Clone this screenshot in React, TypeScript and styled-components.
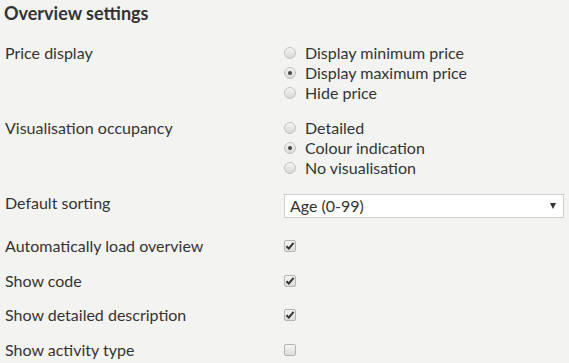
import styled, { createGlobalStyle } from "styled-components";

const GlobalStyle = createGlobalStyle`
  html, body {
    margin: 0;
    padding: 0;
    background: #f3f3f2;
  }
  body {
    font-family: "Lato", "Open Sans", sans-serif;
    color: #333333;
  }
`;

type Option = { label: string; checked?: boolean };

const priceOptions: Option[] = [
  { label: "Display minimum price" },
  { label: "Display maximum price", checked: true },
  { label: "Hide price" },
];

const visualOptions: Option[] = [
  { label: "Detailed" },
  { label: "Colour indication", checked: true },
  { label: "No visualisation" },
];

const checkRows = [
  { label: "Automatically load overview", checked: true },
  { label: "Show code", checked: true },
  { label: "Show detailed description", checked: true },
  { label: "Show activity type", checked: false },
];

function RadioGroup({ options }: { options: Option[] }) {
  return (
    <StRadioList>
      {options.map((o) => (
        <StRadioItem key={o.label}>
          <StRadio $checked={!!o.checked} />
          {o.label}
        </StRadioItem>
      ))}
    </StRadioList>
  );
}

function App() {
  return (
    <StPage>
      <GlobalStyle />
      <StTitle>Overview settings</StTitle>
      <StRow>
        <StLabel>Price display</StLabel>
        <RadioGroup options={priceOptions} />
      </StRow>
      <StRow>
        <StLabel>Visualisation occupancy</StLabel>
        <RadioGroup options={visualOptions} />
      </StRow>
      <StRow $space={18}>
        <StLabel>Default sorting</StLabel>
        <StSelect>
          <span>Age (0-99)</span>
          <StArrow />
        </StSelect>
      </StRow>
      {checkRows.map((r) => (
        <StRow key={r.label} $space={14.5}>
          <StLabel>{r.label}</StLabel>
          <StCheckCell>
            <StCheckbox>
              {r.checked && (
                <svg width="10" height="10" viewBox="0 0 10 10">
                  <path
                    d="M1.5 5.2 L3.8 7.6 L8.6 1.8"
                    fill="none"
                    stroke="#333"
                    strokeWidth="2"
                  />
                </svg>
              )}
            </StCheckbox>
          </StCheckCell>
        </StRow>
      ))}
    </StPage>
  );
}

const StPage = styled.div`
  display: flex;
  flex-direction: column;
  padding: 3px 5px 0 5px;
  width: 569px;
  box-sizing: border-box;
`;

const StTitle = styled.h1`
  margin: 0 0 20px -1px;
  font-size: 18px;
  font-weight: 700;
  line-height: 20px;
  color: #333333;
`;

const StRow = styled.div<{ $space?: number }>`
  display: grid;
  grid-template-columns: 279px 1fr;
  align-items: start;
  padding-bottom: ${(p) => p.$space ?? 15}px;
  font-size: 16px;
  line-height: 20px;
`;

const StLabel = styled.div`
  white-space: nowrap;
`;

const StRadioList = styled.div`
  display: flex;
  flex-direction: column;
`;

const StRadioItem = styled.label`
  display: flex;
  align-items: center;
  gap: 9px;
  height: 20px;
`;

const StRadio = styled.span<{ $checked: boolean }>`
  position: relative;
  width: 12px;
  height: 12px;
  border-radius: 50%;
  box-sizing: border-box;
  border: 1px solid #c2c2c2;
  background: linear-gradient(#f4f4f4, #d9d9d9);

  &::after {
    content: "";
    display: ${(p) => (p.$checked ? "block" : "none")};
    position: absolute;
    left: 3px;
    top: 3px;
    width: 4px;
    height: 4px;
    border-radius: 50%;
    background: #444444;
  }
`;

const StSelect = styled.div`
  display: flex;
  align-items: center;
  justify-content: space-between;
  margin-top: 1px;
  height: 24px;
  width: 280px;
  box-sizing: border-box;
  padding: 0 7px 0 5px;
  border: 1px solid #cfcfcf;
  background: #ffffff;
  color: #333333;
`;

const StArrow = styled.span`
  width: 0;
  height: 0;
  border-left: 3.5px solid transparent;
  border-right: 3.5px solid transparent;
  border-top: 6px solid #333333;
`;

const StCheckCell = styled.div`
  display: flex;
  align-items: center;
  height: 20px;
`;

const StCheckbox = styled.span`
  display: flex;
  align-items: center;
  justify-content: center;
  width: 12px;
  height: 12px;
  box-sizing: border-box;
  border: 1px solid #b4b4b4;
  border-radius: 2px;
  background: linear-gradient(#f4f4f4, #dcdcdc);
`;

export default App;
